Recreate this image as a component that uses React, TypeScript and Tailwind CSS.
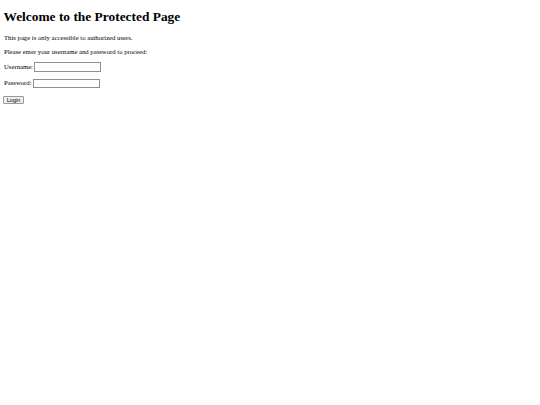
export default function App() {
  return (
    <div className="min-h-[405px] w-[540px] bg-white px-[4px] text-black" style={{ fontFamily: '"Liberation Serif", "Times New Roman", serif' }}>
      <h1 className="-ml-[0.5px] pt-[10px] text-[13.4px] font-bold leading-[14px]">Welcome to the Protected Page</h1>
      <p className="mt-[8.5px] text-[6.7px] leading-[9px]">This page is only accessible to authorized users.</p>
      <p className="mt-[5px] text-[6.7px] leading-[9px]">Please enter your username and password to proceed:</p>
      <div className="mt-[6.5px] flex h-[10px] items-center text-[6.7px]">
        <label>Username:</label>
        <input className="ml-[1px] h-[10px] w-[67px] border border-[#8f8f8f] bg-white" type="text" />
      </div>
      <div className="mt-[7px] flex h-[9px] items-center text-[6.7px]">
        <label>Password:</label>
        <input className="ml-[1px] h-[9px] w-[67px] border border-[#8f8f8f] bg-white" type="password" />
      </div>
      <button className="mt-[7.5px] -ml-[1px] flex h-[8.5px] w-[21px] items-center justify-center rounded-[1px] border border-[#9a9a9a] bg-[#efefef] text-[5.5px] leading-[6px]" style={{ fontFamily: '"Liberation Sans", Arial, sans-serif' }}>
        Login
      </button>
    </div>
  );
}
